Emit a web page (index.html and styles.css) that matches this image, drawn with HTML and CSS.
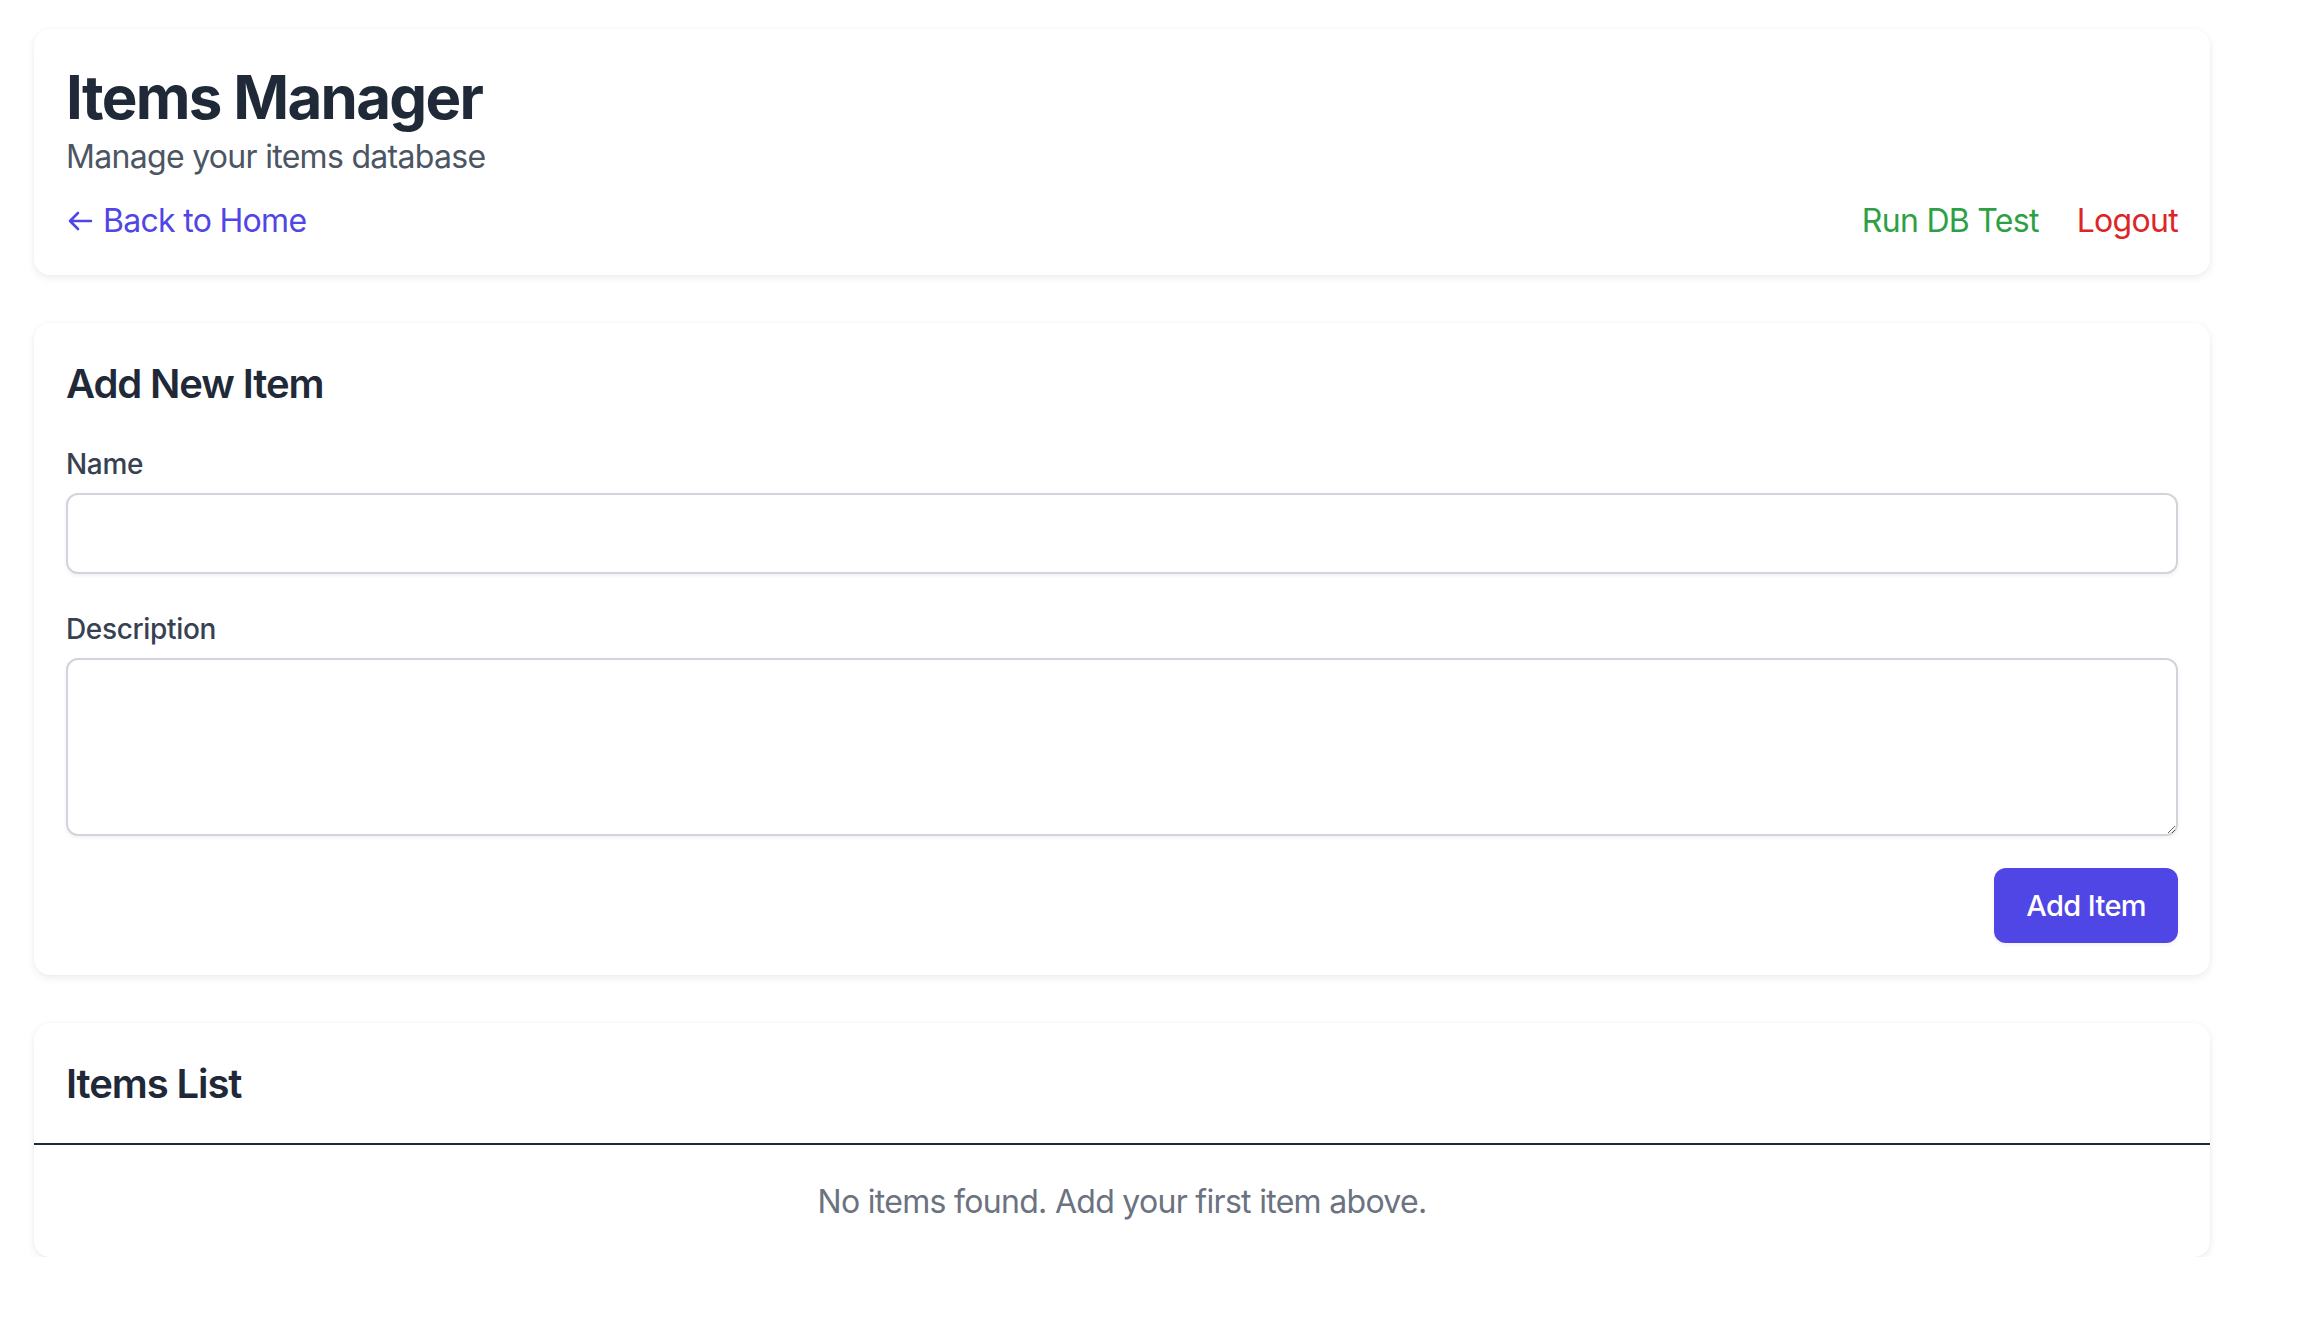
FILE: index.html
```html
<!DOCTYPE html>
<html lang="en">
<head>
<meta charset="utf-8">
<title>Items Manager</title>
<link rel="stylesheet" href="styles.css">
</head>
<body>
<main class="page">
  <section class="card header-card">
    <h1 class="title">Items Manager</h1>
    <p class="subtitle">Manage your items database</p>
    <div class="nav-row">
      <a class="back-link" href="#">
        <svg class="arrow" viewBox="0 0 26 20" width="26" height="20" aria-hidden="true">
          <path d="M24 10H3M11 2L3 10L11 18" fill="none" stroke="currentColor" stroke-width="2.6" stroke-linecap="round" stroke-linejoin="round"/>
        </svg>
        <span>Back to Home</span>
      </a>
      <div class="nav-actions">
        <a class="link-green" href="#">Run DB Test</a>
        <a class="link-red" href="#">Logout</a>
      </div>
    </div>
  </section>

  <section class="card form-card">
    <h2 class="section-title">Add New Item</h2>
    <div class="field">
      <label class="label" for="name">Name</label>
      <input class="input" id="name" type="text">
    </div>
    <div class="field">
      <label class="label" for="desc">Description</label>
      <textarea class="textarea" id="desc" rows="3"></textarea>
    </div>
    <div class="actions">
      <button class="btn" type="button">Add Item</button>
    </div>
  </section>

  <section class="card list-card">
    <div class="list-header">
      <h2 class="section-title">Items List</h2>
    </div>
    <div class="list-body">
      <p class="empty">No items found. Add your first item above.</p>
    </div>
  </section>
</main>
</body>
</html>
```

FILE: styles.css
```css
* {
  box-sizing: border-box;
}

html, body {
  margin: 0;
  padding: 0;
  background: #ffffff;
}

body {
  font-family: "Inter", "Noto Sans", "Liberation Sans", sans-serif;
  color: #1f2937;
  letter-spacing: -0.7px;
}

.page {
  width: 2176px;
  margin-left: 34px;
  padding-top: 29px;
  display: flex;
  flex-direction: column;
  gap: 48px;
}

.card {
  background: #ffffff;
  border-radius: 16px;
  box-shadow: 0 3px 8px rgba(0, 0, 0, 0.07), 0 0 3px rgba(0, 0, 0, 0.04);
}

.header-card {
  padding: 32px 32px 30px;
}

.title {
  margin: 0;
  font-size: 60px;
  line-height: 72px;
  font-weight: 700;
  color: #1f2937;
  letter-spacing: -1.7px;
}

.subtitle {
  margin: 0;
  font-size: 32px;
  line-height: 48px;
  color: #4b5563;
}

.nav-row {
  margin-top: 16px;
  display: flex;
  justify-content: space-between;
  align-items: center;
  font-size: 32px;
  line-height: 48px;
}

.nav-row a {
  text-decoration: none;
}

.back-link {
  display: flex;
  align-items: center;
  gap: 10px;
  color: #4f46e5;
}

.arrow {
  margin-left: 1px;
  display: block;
}

.nav-actions {
  display: flex;
  gap: 38px;
}

.link-green {
  color: #2e9f45;
}

.link-red {
  color: #dc2626;
}

.form-card {
  padding: 33px 32px 32px;
  display: flex;
  flex-direction: column;
}

.section-title {
  margin: 0;
  font-size: 40px;
  line-height: 56px;
  font-weight: 600;
  color: #1f2937;
  letter-spacing: -1.1px;
}

.form-card .section-title {
  margin-bottom: 32px;
}

.field {
  display: flex;
  flex-direction: column;
  margin-bottom: 32px;
}

.field + .field {
  margin-top: 3px;
}

.label {
  font-size: 28px;
  line-height: 40px;
  font-weight: 500;
  color: #374151;
  margin-bottom: 9px;
  letter-spacing: -0.35px;
}

.input,
.textarea {
  width: 100%;
  border: 2px solid #d1d5db;
  border-radius: 12px;
  background: #ffffff;
  box-shadow: 0 2px 4px rgba(0, 0, 0, 0.06);
  font-family: inherit;
  font-size: 32px;
  padding: 0 24px;
  outline: none;
}

.input {
  height: 81px;
}

.textarea {
  height: 178px;
  resize: vertical;
  display: block;
}

.actions {
  display: flex;
  justify-content: flex-end;
  margin-top: 0;
}

.btn {
  height: 75px;
  padding: 0 32px;
  background: #4f46e5;
  color: #ffffff;
  border: none;
  border-radius: 12px;
  font-family: inherit;
  font-size: 29px;
  font-weight: 500;
  letter-spacing: -0.6px;
  box-shadow: 0 2px 4px rgba(0, 0, 0, 0.06);
  cursor: pointer;
}

.list-card {
  overflow: hidden;
}

.list-header {
  padding: 33px 32px 31px;
  border-bottom: 2px solid #1f2937;
}

.list-body {
  padding: 33px 32px 31px;
}

.empty {
  margin: 0;
  text-align: center;
  font-size: 32px;
  line-height: 48px;
  color: #6b7280;
}
```
